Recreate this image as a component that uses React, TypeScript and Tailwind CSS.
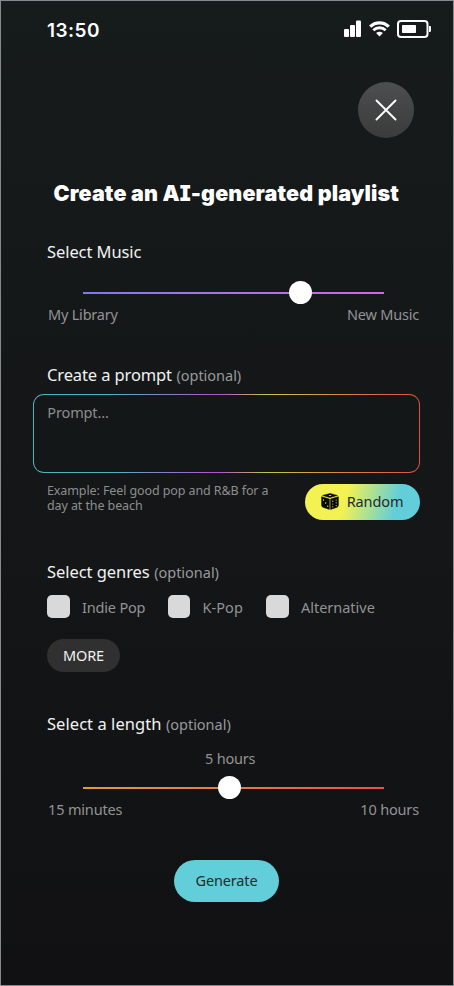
import React from "react";

const noto = "font-['Noto_Sans','Open_Sans',sans-serif]";

function Signal() {
  return (
    <svg width="18" height="18" viewBox="0 0 18 18" fill="white">
      <rect x="0" y="9" width="5" height="8" rx="1" />
      <rect x="6" y="5" width="5" height="12" rx="1" />
      <rect x="12" y="0.5" width="5" height="16.5" rx="1" />
    </svg>
  );
}

function Wifi() {
  return (
    <svg width="21" height="16" viewBox="0 0 21 16" fill="none" stroke="white">
      <path d="M1.2 5.6C6.4.5 14.6.5 19.8 5.6" strokeWidth="3.2" />
      <path d="M4.3 9.2C7.8 6 13.2 6 16.7 9.2" strokeWidth="2.9" />
      <path d="M10.5 15.4 7.1 12c1.9-1.6 4.9-1.6 6.8 0Z" fill="white" stroke="none" />
    </svg>
  );
}

function Battery() {
  return (
    <svg width="35" height="18" viewBox="0 0 35 18">
      <rect x="1" y="1" width="29.5" height="16" rx="3" fill="none" stroke="white" strokeWidth="2" />
      <rect x="5" y="5" width="14" height="8" rx="0.8" fill="white" />
      <path d="M32 6h.8c.8 0 1.2.5 1.2 1.2v3.6c0 .7-.4 1.2-1.2 1.2H32Z" fill="white" />
    </svg>
  );
}

function Dice() {
  return (
    <svg width="18" height="17" viewBox="0 0 18 17">
      <g fill="#080a05" stroke="#080a05" strokeWidth=".5" strokeLinejoin="round">
        <path d="M9 .5 16.4 2.4 9 4.6 1.6 2.4Z" />
        <path d="M.6 3.7 8.4 6V16.4L2 14.3Q.6 13.7.6 12.2Z" />
        <path d="M17.4 3.7 9.6 6V16.4L16 14.3Q17.4 13.7 17.4 12.2Z" />
      </g>
      <g fill="#dfe85a">
        <ellipse cx="9" cy="2.4" rx="1.3" ry=".5" />
        <circle cx="2.5" cy="7" r=".65" />
        <circle cx="4.6" cy="10" r=".65" />
        <circle cx="6.7" cy="13.2" r=".65" />
        <circle cx="11.8" cy="8.2" r=".6" />
        <circle cx="15.2" cy="7" r=".6" />
        <circle cx="11.8" cy="11" r=".6" />
        <circle cx="15.2" cy="9.8" r=".6" />
        <circle cx="11.8" cy="13.8" r=".6" />
        <circle cx="15.2" cy="12.6" r=".6" />
      </g>
    </svg>
  );
}

function Heading({ children, optional, spacing }: { children: React.ReactNode; optional?: boolean; spacing: string }) {
  return (
    <h2 className={"h-6 whitespace-nowrap text-[16.5px] leading-6 text-[#f1f2f2] " + spacing}>
      {children}
      {optional && <span className="ml-[4.5px] text-[14.5px] tracking-[-0.02px] text-[#98999a]">(optional)</span>}
    </h2>
  );
}

function Slider({ track, knob }: { track: string; knob: string }) {
  return (
    <div className="ml-9 flex h-[23px] w-[300.5px] items-center">
      <div className={"flex h-[2px] w-full items-center " + track}>
        <div className={"size-[22.5px] shrink-0 rounded-full bg-white " + knob} />
      </div>
    </div>
  );
}

function Genre({ name, spacing }: { name: string; spacing: string }) {
  return (
    <label className="flex items-center gap-[12.5px]">
      <span className="size-[22.5px] rounded-[5px] bg-[#d9d9d9]" />
      <span className={"whitespace-nowrap text-[14.5px] leading-5 text-[#929394] " + spacing}>{name}</span>
    </label>
  );
}

export default function App() {
  return (
    <main className={"flex h-[986px] w-[454px] flex-col overflow-hidden border border-[#858b8c] bg-linear-to-b from-[#161b1c] via-[#141617] to-[#111113] " + noto}>
      <header className="flex h-[60px] shrink-0 items-center justify-between pr-[21px] pl-[46px]">
        <time className="font-['Inter',sans-serif] text-[19px] font-semibold tracking-[0.45px] text-white">13:50</time>
        <div className="mb-[5px] flex items-center gap-[7px]">
          <Signal />
          <Wifi />
          <Battery />
        </div>
      </header>

      <button aria-label="Close" className="mt-[20.5px] mr-[39px] flex size-[56px] shrink-0 items-center justify-center self-end rounded-full bg-linear-to-b from-[#4d4e50] to-[#3a3c3b]">
        <svg width="22" height="22" viewBox="0 0 22 22" fill="none" stroke="white" strokeWidth="1.9" strokeLinecap="round">
          <path d="m1.5 1.5 19 19m0-19-19 19" />
        </svg>
      </button>

      <h1 className="mt-[40.5px] ml-[52.5px] h-[30px] whitespace-nowrap font-['Inter',sans-serif] text-[21.5px] leading-[30px] font-black tracking-[0.14px] text-white [font-feature-settings:'cv08']">
        Create an AI-generated playlist
      </h1>

      <section className="mt-[32px] pr-[34px] pl-[46px]">
        <Heading spacing="tracking-[-0.08px]">Select Music</Heading>
        <div className="mt-[17px]">
          <Slider track="bg-linear-to-r from-[#7c78f3] to-[#d564e7]" knob="ml-[206px]" />
        </div>
        <div className="flex justify-between text-[14.5px] leading-5 tracking-[-0.2px] text-[#929394]">
          <span className="pl-px">My Library</span>
          <span>New Music</span>
        </div>
      </section>

      <section className="mt-[39px] pr-[33px] pl-[32px]">
        <div className="pl-[14px]">
          <Heading optional spacing="tracking-[-0.12px]">Create a prompt</Heading>
        </div>
        <div className="mt-[7px] h-[79px] rounded-[11px] bg-[linear-gradient(90deg,#4eb5bf_0%,#4eb5bf_20%,#b451d2_48%,#c3c940_61%,#df823f_80%,#df5148_100%)] p-[1.25px]">
          <div className="h-full rounded-[9.75px] bg-[#141718] px-[13px] pt-[7px] text-[14.5px] leading-5 tracking-[-0.12px] text-[#8c8d8e]">Prompt...</div>
        </div>
        <div className="mt-[10px] flex justify-between pl-[14px]">
          <p className="whitespace-nowrap text-[12.5px] leading-[15px] tracking-[-0.1px] text-[#8d8e8f]">
            Example: Feel good pop and R&amp;B for a<br />day at the beach
          </p>
          <button className="mt-[0.5px] flex h-[36px] w-[115px] items-center justify-center gap-[8px] rounded-full bg-[linear-gradient(105deg,#f4f252_0%,#f4f252_35%,#62ced9_78%,#62ced9_100%)] pr-px text-[14.5px] tracking-[-0.12px] text-[#25292a]">
            <Dice />
            <span>Random</span>
          </button>
        </div>
      </section>

      <section className="mt-[40px] pl-[46px]">
        <Heading optional spacing="tracking-[-0.06px]">Select genres</Heading>
        <div className="mt-[11.5px] grid h-[23px] grid-cols-[120.5px_98.5px_auto] items-center">
          <Genre name="Indie Pop" spacing="tracking-[-0.18px]" />
          <Genre name="K-Pop" spacing="tracking-[0.05px]" />
          <Genre name="Alternative" spacing="tracking-[-0.02px]" />
        </div>
        <button className="mt-[20.5px] flex h-[33px] w-[73px] items-center justify-center rounded-full bg-[#303031] pt-px text-[14.5px] tracking-[-0.1px] text-[#f2f2f2]">MORE</button>
      </section>

      <section className="mt-[40px] pr-[34px] pl-[46px]">
        <Heading optional spacing="tracking-[0.05px]">Select a length</Heading>
        <div className="mt-[12px] h-5 pl-[158px] text-[14.5px] leading-5 tracking-[-0.2px] text-[#929394]">5 hours</div>
        <div className="mt-[8.5px]">
          <Slider track="bg-linear-to-r from-[#e39a3d] to-[#ed4b4b]" knob="ml-[135px]" />
        </div>
        <div className="flex justify-between text-[14.5px] leading-5 tracking-[-0.16px] text-[#929394]">
          <span className="pl-px">15 minutes</span>
          <span>10 hours</span>
        </div>
      </section>

      <button className="mt-[40.5px] ml-[173px] flex h-[42px] w-[105px] shrink-0 items-center justify-center rounded-full bg-[#62ced9] text-[14.5px] tracking-[-0.16px] text-[#25292a]">Generate</button>
    </main>
  );
}
